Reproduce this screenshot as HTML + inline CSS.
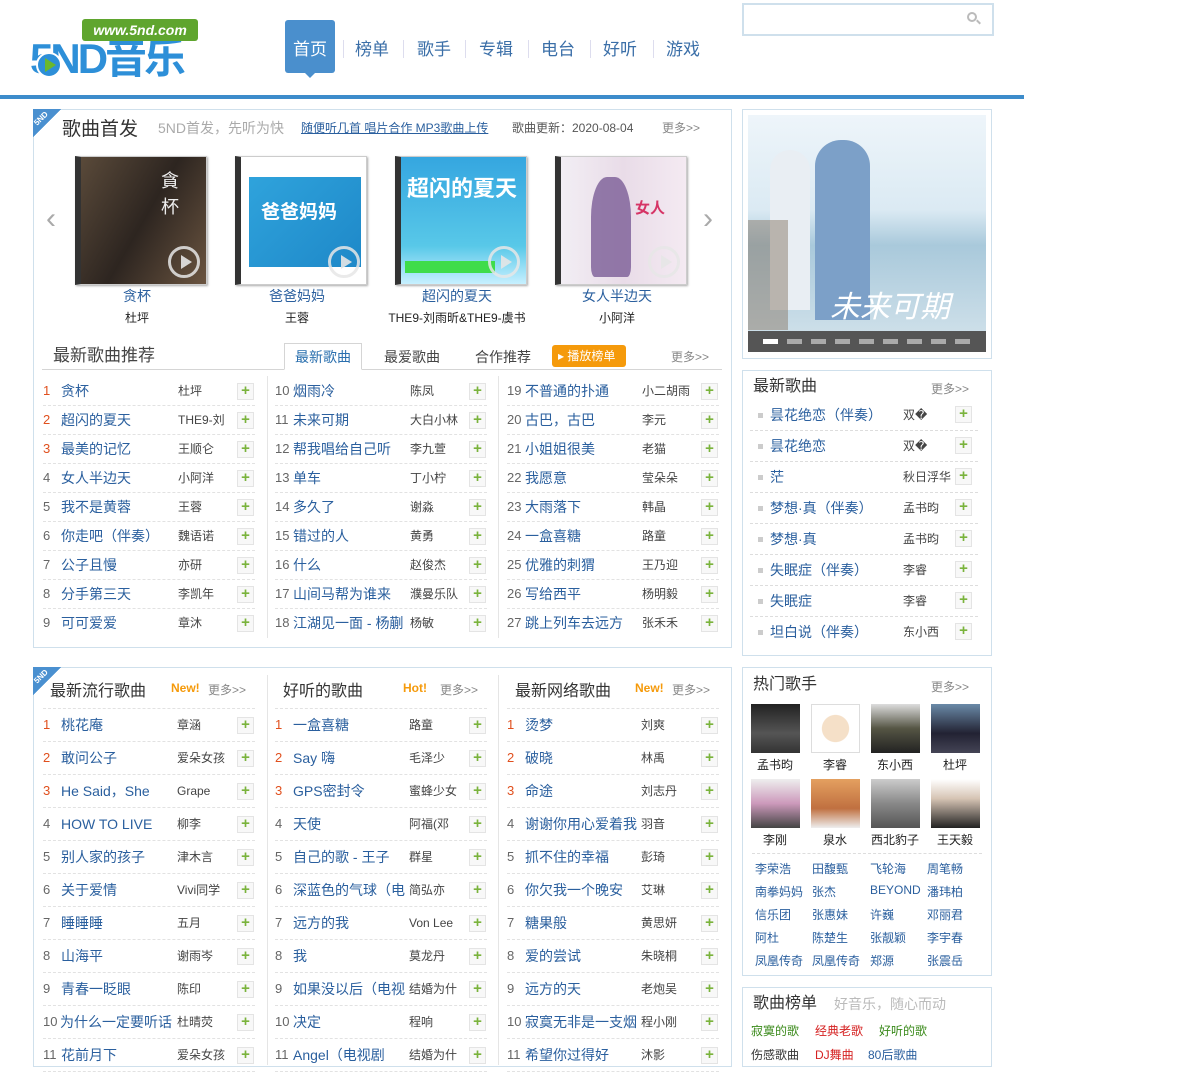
<!DOCTYPE html>
<html><head><meta charset="utf-8"><style>
*{margin:0;padding:0;box-sizing:border-box}
body{width:1200px;height:1063px;overflow:hidden;background:#fff;font-family:"Liberation Sans","Noto Sans CJK SC",sans-serif;position:relative;color:#333}
.a{position:absolute;white-space:nowrap}
.box{position:absolute;border:1px solid #cfe0ec;background:#fff}
.nav{position:absolute;top:35px;font-size:17px;color:#3b6fa8}
.sep{position:absolute;top:40px;width:1px;height:18px;background:#dde}
.col{position:absolute;width:212px}
.r{position:relative;height:29px;border-bottom:1px dashed #e2e2e2;font-size:14px;line-height:28px}
.r .n{position:absolute;left:0;color:#666;font-size:13px}
.r .n.h{color:#e0501e}
.r .s{position:absolute;left:18px;color:#2a5f9e;width:112px;overflow:hidden;white-space:nowrap}
.r .t{position:absolute;left:135px;color:#444;font-size:12px;width:50px;overflow:hidden;white-space:nowrap}
.r .p,.pp{position:absolute;left:194px;top:6px;width:17px;height:17px;border:1px solid #e4e4e4;background:#f8f8f8;color:#7ab33c;font-size:15px;line-height:14px;text-align:center;font-weight:bold}
.b .r{height:33px;line-height:32px}
.b .r .p{top:8px}
.b .r .t{left:134px}
.cov{position:absolute;top:156px;width:132px;height:129px;border:1px solid #ccc;border-left:6px solid #333;box-shadow:1px 1px 2px #aaa}
.play{position:absolute;right:6px;bottom:6px;width:32px;height:32px;border:3px solid rgba(230,230,230,.85);border-radius:50%}
.play:after{content:"";position:absolute;left:10px;top:6px;border-left:11px solid rgba(230,230,230,.9);border-top:7px solid transparent;border-bottom:7px solid transparent}
.at{position:absolute;top:286px;width:160px;text-align:center;font-size:14px;color:#2a5f9e}
.aa{position:absolute;top:309px;width:160px;text-align:center;font-size:12px;color:#222}
.more{font-size:12px;color:#888}
.rl{position:absolute;left:750px;width:228px}
.rr{position:relative;height:31px;border-bottom:1px dashed #ddd;line-height:30px;font-size:14px}
.rr .d{position:absolute;left:8px;top:13px;width:5px;height:5px;background:#ccc}
.rr .s{position:absolute;left:20px;color:#2a5f9e}
.rr .t{position:absolute;left:153px;font-size:12px;color:#444}
.rr .pp{left:205px;top:6px}
.ph{position:absolute;width:49px;height:49px}
.pn{position:absolute;width:60px;text-align:center;font-size:12px;color:#222}
.lk{position:absolute;font-size:12px;color:#2a5f9e}
.tri{position:absolute;left:33px;width:28px;height:28px;background:linear-gradient(135deg,#4a90d0 50%,transparent 50%)}
.tri b{position:absolute;left:0;top:5px;color:#fff;font-size:8px;transform:rotate(-45deg)}
</style></head><body>

<!-- logo -->
<div class="a" style="left:30px;top:38px;font-size:42px;font-weight:bold;color:#2d8fd8;letter-spacing:-3px;line-height:42px">5ND音乐</div>
<div class="a" style="left:82px;top:19px;width:116px;height:22px;background:#5fa52e;border-radius:3px;color:#fff;font-style:italic;font-weight:bold;font-size:14px;line-height:22px;text-align:center">www.5nd.com</div>
<div class="a" style="left:36px;top:52px;width:26px;height:26px;border-radius:50%;background:#2d8fd8;border:2px solid #fff"></div>
<div class="a" style="left:45px;top:58px;border-left:11px solid #6ab82c;border-top:7px solid transparent;border-bottom:7px solid transparent"></div>

<!-- nav -->
<div class="a" style="left:285px;top:20px;width:50px;height:53px;background:#4a8fcd;border-radius:3px"></div>
<div class="a" style="left:305px;top:73px;border-top:5px solid #4a8fcd;border-left:5px solid transparent;border-right:5px solid transparent"></div>
<div class="nav" style="left:293px;color:#fff">首页</div>
<div class="nav" style="left:355px">榜单</div><div class="sep" style="left:343px"></div>
<div class="nav" style="left:417px">歌手</div><div class="sep" style="left:403px"></div>
<div class="nav" style="left:479px">专辑</div><div class="sep" style="left:465px"></div>
<div class="nav" style="left:541px">电台</div><div class="sep" style="left:528px"></div>
<div class="nav" style="left:603px">好听</div><div class="sep" style="left:590px"></div>
<div class="nav" style="left:666px">游戏</div><div class="sep" style="left:653px"></div>

<div class="a" style="left:742px;top:3px;width:252px;height:33px;border:2px solid #cfe0ec"></div>
<div class="a" style="left:967px;top:12px;width:10px;height:10px;border:2px solid #bbb;border-radius:50%"></div>
<div class="a" style="left:976px;top:21px;width:5px;height:2px;background:#bbb;transform:rotate(45deg)"></div>

<div class="a" style="left:0;top:95px;width:1024px;height:4px;background:#3d8ccb"></div>

<!-- box1 -->
<div class="box" style="left:33px;top:109px;width:699px;height:539px"></div>
<div class="tri" style="top:109px"><b>5ND</b></div>
<div class="a" style="left:62px;top:114px;font-size:19px;color:#333">歌曲首发</div>
<div class="a" style="left:158px;top:118px;font-size:14px;color:#aaa">5ND首发，先听为快</div>
<div class="a" style="left:301px;top:119px;font-size:12px;color:#2a5f9e;text-decoration:underline">随便听几首 唱片合作 MP3歌曲上传</div>
<div class="a" style="left:512px;top:119px;font-size:12px;color:#555">歌曲更新：2020-08-04</div>
<div class="a more" style="left:662px;top:119px">更多&gt;&gt;</div>

<div class="a" style="left:46px;top:202px;font-size:30px;color:#aaa">‹</div>
<div class="a" style="left:703px;top:202px;font-size:30px;color:#aaa">›</div>

<div class="cov" style="left:75px;background:linear-gradient(120deg,#5a4a3a,#2d2520 50%,#6a5440)"><div class="a" style="left:80px;top:10px;color:#eee;font-size:18px">貪<br>杯</div><div class="play"></div></div>
<div class="cov" style="left:235px;background:#fff"><div class="a" style="left:8px;top:20px;width:112px;height:90px;background:linear-gradient(135deg,#2fa3dc,#1e88c8)"></div><div class="a" style="left:20px;top:40px;color:#fff;font-size:19px;font-weight:bold">爸爸妈妈</div><div class="play"></div></div>
<div class="cov" style="left:395px;background:linear-gradient(#35a6e0,#58c8e8 70%,#c7f0ff)"><div class="a" style="left:6px;top:14px;color:#fff;font-size:22px;font-weight:bold">超闪的夏天</div><div class="a" style="left:4px;top:104px;width:90px;height:12px;background:#3fdc4a"></div><div class="play"></div></div>
<div class="cov" style="left:555px;background:linear-gradient(90deg,#f2eef4,#e9dce8 50%,#f4eaf2)"><div class="a" style="left:30px;top:20px;width:40px;height:100px;background:#6b4a8a;border-radius:40% 40% 10% 10%;opacity:.7"></div><div class="a" style="left:74px;top:40px;color:#d63466;font-size:15px;font-weight:bold">女人</div><div class="play"></div></div>

<div class="at" style="left:57px">贪杯</div><div class="aa" style="left:57px">杜坪</div>
<div class="at" style="left:217px">爸爸妈妈</div><div class="aa" style="left:217px">王蓉</div>
<div class="at" style="left:377px">超闪的夏天</div><div class="aa" style="left:377px">THE9-刘雨昕&amp;THE9-虞书</div>
<div class="at" style="left:537px">女人半边天</div><div class="aa" style="left:537px">小阿洋</div>

<!-- tabs -->
<div class="a" style="left:53px;top:341px;font-size:17px;color:#444">最新歌曲推荐</div>
<div class="a" style="left:42px;top:369px;width:680px;height:1px;background:#d5d5d5"></div>
<div class="a" style="left:284px;top:343px;width:78px;height:27px;border:1px solid #d5d5d5;border-bottom:1px solid #fff;background:#fff;text-align:center;line-height:26px;font-size:14px;color:#2a6fae">最新歌曲</div>
<div class="a" style="left:384px;top:347px;font-size:14px;color:#444">最爱歌曲</div>
<div class="a" style="left:475px;top:347px;font-size:14px;color:#444">合作推荐</div>
<div class="a" style="left:552px;top:345px;width:74px;height:22px;background:#f59a0b;border-radius:3px;color:#fff;font-size:12px;line-height:22px;padding-left:6px">▸ 播放榜单</div>
<div class="a more" style="left:671px;top:348px">更多&gt;&gt;</div>
<div class="a" style="left:267px;top:376px;width:1px;height:262px;background:#e5e5e5"></div>
<div class="a" style="left:498px;top:376px;width:1px;height:262px;background:#e5e5e5"></div>

<div class="col" style="left:43px;top:377px">
<div class="r"><span class="n h">1</span><span class="s">贪杯</span><span class="t">杜坪</span><span class="p">+</span></div>
<div class="r"><span class="n h">2</span><span class="s">超闪的夏天</span><span class="t">THE9-刘</span><span class="p">+</span></div>
<div class="r"><span class="n h">3</span><span class="s">最美的记忆</span><span class="t">王顺仑</span><span class="p">+</span></div>
<div class="r"><span class="n">4</span><span class="s">女人半边天</span><span class="t">小阿洋</span><span class="p">+</span></div>
<div class="r"><span class="n">5</span><span class="s">我不是黄蓉</span><span class="t">王蓉</span><span class="p">+</span></div>
<div class="r"><span class="n">6</span><span class="s">你走吧（伴奏）</span><span class="t">魏语诺</span><span class="p">+</span></div>
<div class="r"><span class="n">7</span><span class="s">公子且慢</span><span class="t">亦研</span><span class="p">+</span></div>
<div class="r"><span class="n">8</span><span class="s">分手第三天</span><span class="t">李凯年</span><span class="p">+</span></div>
<div class="r" style="border:0"><span class="n">9</span><span class="s">可可爱爱</span><span class="t">章沐</span><span class="p">+</span></div>
</div>
<div class="col" style="left:275px;top:377px">
<div class="r"><span class="n">10</span><span class="s">烟雨冷</span><span class="t">陈凤</span><span class="p">+</span></div>
<div class="r"><span class="n">11</span><span class="s">未来可期</span><span class="t">大白小林</span><span class="p">+</span></div>
<div class="r"><span class="n">12</span><span class="s">帮我唱给自己听</span><span class="t">李九萱</span><span class="p">+</span></div>
<div class="r"><span class="n">13</span><span class="s">单车</span><span class="t">丁小柠</span><span class="p">+</span></div>
<div class="r"><span class="n">14</span><span class="s">多久了</span><span class="t">谢淼</span><span class="p">+</span></div>
<div class="r"><span class="n">15</span><span class="s">错过的人</span><span class="t">黄勇</span><span class="p">+</span></div>
<div class="r"><span class="n">16</span><span class="s">什么</span><span class="t">赵俊杰</span><span class="p">+</span></div>
<div class="r"><span class="n">17</span><span class="s">山间马帮为谁来</span><span class="t">濮曼乐队</span><span class="p">+</span></div>
<div class="r" style="border:0"><span class="n">18</span><span class="s">江湖见一面 - 杨蒯</span><span class="t">杨敏</span><span class="p">+</span></div>
</div>
<div class="col" style="left:507px;top:377px">
<div class="r"><span class="n">19</span><span class="s">不普通的扑通</span><span class="t">小二胡雨</span><span class="p">+</span></div>
<div class="r"><span class="n">20</span><span class="s">古巴，古巴</span><span class="t">李元</span><span class="p">+</span></div>
<div class="r"><span class="n">21</span><span class="s">小姐姐很美</span><span class="t">老猫</span><span class="p">+</span></div>
<div class="r"><span class="n">22</span><span class="s">我愿意</span><span class="t">莹朵朵</span><span class="p">+</span></div>
<div class="r"><span class="n">23</span><span class="s">大雨落下</span><span class="t">韩晶</span><span class="p">+</span></div>
<div class="r"><span class="n">24</span><span class="s">一盒喜糖</span><span class="t">路童</span><span class="p">+</span></div>
<div class="r"><span class="n">25</span><span class="s">优雅的刺猬</span><span class="t">王乃迎</span><span class="p">+</span></div>
<div class="r"><span class="n">26</span><span class="s">写给西平</span><span class="t">杨明毅</span><span class="p">+</span></div>
<div class="r" style="border:0"><span class="n">27</span><span class="s">跳上列车去远方</span><span class="t">张禾禾</span><span class="p">+</span></div>
</div>

<!-- right image -->
<div class="box" style="left:742px;top:109px;width:250px;height:250px"></div>
<div class="a" style="left:748px;top:115px;width:238px;height:237px;background:linear-gradient(#eef5fa,#dbeaf3 40%,#a9c9db 55%,#d5e4ec)"></div>
<div class="a" style="left:770px;top:150px;width:40px;height:160px;background:#e9eef3;border-radius:20px 20px 0 0"></div>
<div class="a" style="left:815px;top:140px;width:55px;height:180px;background:#7ca0c8;border-radius:26px 26px 0 0"></div>
<div class="a" style="left:748px;top:220px;width:40px;height:110px;background:#8a7a6a;opacity:.5"></div>
<div class="a" style="left:830px;top:282px;font-size:30px;color:#fff;font-style:italic">未来可期</div>
<div class="a" style="left:748px;top:331px;width:238px;height:21px;background:#555"></div>
<div class="a" style="left:763px;top:339px;width:210px;height:5px;background:repeating-linear-gradient(90deg,#aaa 0 15px,transparent 15px 24px)"></div>
<div class="a" style="left:763px;top:339px;width:15px;height:5px;background:#fff"></div>

<!-- right list -->
<div class="box" style="left:742px;top:370px;width:250px;height:286px"></div>
<div class="a" style="left:753px;top:372px;font-size:16px;color:#333">最新歌曲</div>
<div class="a more" style="left:931px;top:380px">更多&gt;&gt;</div>
<div class="rl" style="top:400px">
<div class="rr"><span class="d"></span><span class="s">昙花绝恋（伴奏）</span><span class="t">双�</span><span class="pp">+</span></div>
<div class="rr"><span class="d"></span><span class="s">昙花绝恋</span><span class="t">双�</span><span class="pp">+</span></div>
<div class="rr"><span class="d"></span><span class="s">茫</span><span class="t">秋日浮华</span><span class="pp">+</span></div>
<div class="rr"><span class="d"></span><span class="s">梦想·真（伴奏）</span><span class="t">孟书昀</span><span class="pp">+</span></div>
<div class="rr"><span class="d"></span><span class="s">梦想·真</span><span class="t">孟书昀</span><span class="pp">+</span></div>
<div class="rr"><span class="d"></span><span class="s">失眠症（伴奏）</span><span class="t">李睿</span><span class="pp">+</span></div>
<div class="rr"><span class="d"></span><span class="s">失眠症</span><span class="t">李睿</span><span class="pp">+</span></div>
<div class="rr" style="border:0"><span class="d"></span><span class="s">坦白说（伴奏）</span><span class="t">东小西</span><span class="pp">+</span></div>
</div>

<!-- bottom box -->
<div class="box" style="left:33px;top:667px;width:699px;height:400px"></div>
<div class="tri" style="top:667px"><b>5ND</b></div>
<div class="a" style="left:50px;top:677px;font-size:16px;color:#333">最新流行歌曲</div>
<div class="a" style="left:171px;top:681px;font-size:12px;color:#f59a0b;font-weight:bold">New!</div>
<div class="a more" style="left:208px;top:681px">更多&gt;&gt;</div>
<div class="a" style="left:283px;top:677px;font-size:16px;color:#333">好听的歌曲</div>
<div class="a" style="left:403px;top:681px;font-size:12px;color:#f59a0b;font-weight:bold">Hot!</div>
<div class="a more" style="left:440px;top:681px">更多&gt;&gt;</div>
<div class="a" style="left:515px;top:677px;font-size:16px;color:#333">最新网络歌曲</div>
<div class="a" style="left:635px;top:681px;font-size:12px;color:#f59a0b;font-weight:bold">New!</div>
<div class="a more" style="left:672px;top:681px">更多&gt;&gt;</div>
<div class="a" style="left:267px;top:675px;width:1px;height:390px;background:#e5e5e5"></div>
<div class="a" style="left:498px;top:675px;width:1px;height:390px;background:#e5e5e5"></div>

<div class="col b" style="left:43px;top:708px;border-top:1px dashed #e2e2e2">
<div class="r"><span class="n h">1</span><span class="s">桃花庵</span><span class="t">章涵</span><span class="p">+</span></div>
<div class="r"><span class="n h">2</span><span class="s">敢问公子</span><span class="t">爱朵女孩</span><span class="p">+</span></div>
<div class="r"><span class="n h">3</span><span class="s">He Said，She</span><span class="t">Grape</span><span class="p">+</span></div>
<div class="r"><span class="n">4</span><span class="s">HOW TO LIVE</span><span class="t">柳李</span><span class="p">+</span></div>
<div class="r"><span class="n">5</span><span class="s">别人家的孩子</span><span class="t">津木言</span><span class="p">+</span></div>
<div class="r"><span class="n">6</span><span class="s">关于爱情</span><span class="t">Vivi同学</span><span class="p">+</span></div>
<div class="r"><span class="n">7</span><span class="s">睡睡睡</span><span class="t">五月</span><span class="p">+</span></div>
<div class="r"><span class="n">8</span><span class="s">山海平</span><span class="t">谢雨岑</span><span class="p">+</span></div>
<div class="r"><span class="n">9</span><span class="s">青春一眨眼</span><span class="t">陈印</span><span class="p">+</span></div>
<div class="r"><span class="n">10</span><span class="s" style="left:17px;width:120px">为什么一定要听话</span><span class="t">杜晴荧</span><span class="p">+</span></div>
<div class="r"><span class="n">11</span><span class="s">花前月下</span><span class="t">爱朵女孩</span><span class="p">+</span></div>
</div>
<div class="col b" style="left:275px;top:708px;border-top:1px dashed #e2e2e2">
<div class="r"><span class="n h">1</span><span class="s">一盒喜糖</span><span class="t">路童</span><span class="p">+</span></div>
<div class="r"><span class="n h">2</span><span class="s">Say 嗨</span><span class="t">毛泽少</span><span class="p">+</span></div>
<div class="r"><span class="n h">3</span><span class="s">GPS密封令</span><span class="t">蜜蜂少女</span><span class="p">+</span></div>
<div class="r"><span class="n">4</span><span class="s">天使</span><span class="t">阿福(邓</span><span class="p">+</span></div>
<div class="r"><span class="n">5</span><span class="s">自己的歌 - 王子</span><span class="t">群星</span><span class="p">+</span></div>
<div class="r"><span class="n">6</span><span class="s">深蓝色的气球（电</span><span class="t">简弘亦</span><span class="p">+</span></div>
<div class="r"><span class="n">7</span><span class="s">远方的我</span><span class="t">Von Lee</span><span class="p">+</span></div>
<div class="r"><span class="n">8</span><span class="s">我</span><span class="t">莫龙丹</span><span class="p">+</span></div>
<div class="r"><span class="n">9</span><span class="s">如果没以后（电视</span><span class="t">结婚为什</span><span class="p">+</span></div>
<div class="r"><span class="n">10</span><span class="s">决定</span><span class="t">程响</span><span class="p">+</span></div>
<div class="r"><span class="n">11</span><span class="s">Angel（电视剧</span><span class="t">结婚为什</span><span class="p">+</span></div>
</div>
<div class="col b" style="left:507px;top:708px;border-top:1px dashed #e2e2e2">
<div class="r"><span class="n h">1</span><span class="s">烫梦</span><span class="t">刘爽</span><span class="p">+</span></div>
<div class="r"><span class="n h">2</span><span class="s">破晓</span><span class="t">林禹</span><span class="p">+</span></div>
<div class="r"><span class="n h">3</span><span class="s">命途</span><span class="t">刘志丹</span><span class="p">+</span></div>
<div class="r"><span class="n">4</span><span class="s" style="width:118px">谢谢你用心爱着我</span><span class="t">羽音</span><span class="p">+</span></div>
<div class="r"><span class="n">5</span><span class="s">抓不住的幸福</span><span class="t">彭琦</span><span class="p">+</span></div>
<div class="r"><span class="n">6</span><span class="s">你欠我一个晚安</span><span class="t">艾琳</span><span class="p">+</span></div>
<div class="r"><span class="n">7</span><span class="s">糖果般</span><span class="t">黄思妍</span><span class="p">+</span></div>
<div class="r"><span class="n">8</span><span class="s">爱的尝试</span><span class="t">朱晓桐</span><span class="p">+</span></div>
<div class="r"><span class="n">9</span><span class="s">远方的天</span><span class="t">老炮吴</span><span class="p">+</span></div>
<div class="r"><span class="n">10</span><span class="s">寂寞无非是一支烟</span><span class="t">程小刚</span><span class="p">+</span></div>
<div class="r"><span class="n">11</span><span class="s">希望你过得好</span><span class="t">沐影</span><span class="p">+</span></div>
</div>

<!-- hot singers -->
<div class="box" style="left:742px;top:667px;width:250px;height:309px"></div>
<div class="a" style="left:753px;top:670px;font-size:16px;color:#333">热门歌手</div>
<div class="a more" style="left:931px;top:678px">更多&gt;&gt;</div>
<div class="ph" style="left:751px;top:704px;background:linear-gradient(#222,#555 60%,#333)"></div>
<div class="ph" style="left:811px;top:704px;background:radial-gradient(circle at 50% 50%,#f5e0c8 40%,#fff 42%);border:1px solid #ddd"></div>
<div class="ph" style="left:871px;top:704px;background:linear-gradient(#ddd,#554 50%,#222)"></div>
<div class="ph" style="left:931px;top:704px;background:linear-gradient(#6a8aa8,#223 60%,#445)"></div>
<div class="pn" style="left:745px;top:756px">孟书昀</div><div class="pn" style="left:805px;top:756px">李睿</div><div class="pn" style="left:865px;top:756px">东小西</div><div class="pn" style="left:925px;top:756px">杜坪</div>
<div class="ph" style="left:751px;top:779px;background:linear-gradient(#eee,#c9b 50%,#444)"></div>
<div class="ph" style="left:811px;top:779px;background:linear-gradient(#e4a060,#c07040 60%,#eee)"></div>
<div class="ph" style="left:871px;top:779px;background:linear-gradient(#ccc,#888 50%,#555)"></div>
<div class="ph" style="left:931px;top:779px;background:linear-gradient(#fff,#d6c4b4 40%,#222)"></div>
<div class="pn" style="left:745px;top:831px">李刚</div><div class="pn" style="left:805px;top:831px">泉水</div><div class="pn" style="left:865px;top:831px">西北豹子</div><div class="pn" style="left:925px;top:831px">王天毅</div>
<div class="a" style="left:752px;top:853px;width:230px;border-top:1px dashed #ddd"></div>
<div class="lk" style="left:755px;top:860px">李荣浩</div><div class="lk" style="left:812px;top:860px">田馥甄</div><div class="lk" style="left:870px;top:860px">飞轮海</div><div class="lk" style="left:927px;top:860px">周笔畅</div>
<div class="lk" style="left:755px;top:883px">南拳妈妈</div><div class="lk" style="left:812px;top:883px">张杰</div><div class="lk" style="left:870px;top:883px">BEYOND</div><div class="lk" style="left:927px;top:883px">潘玮柏</div>
<div class="lk" style="left:755px;top:906px">信乐团</div><div class="lk" style="left:812px;top:906px">张惠妹</div><div class="lk" style="left:870px;top:906px">许巍</div><div class="lk" style="left:927px;top:906px">邓丽君</div>
<div class="lk" style="left:755px;top:929px">阿杜</div><div class="lk" style="left:812px;top:929px">陈楚生</div><div class="lk" style="left:870px;top:929px">张靓颖</div><div class="lk" style="left:927px;top:929px">李宇春</div>
<div class="lk" style="left:755px;top:952px">凤凰传奇</div><div class="lk" style="left:812px;top:952px">凤凰传奇</div><div class="lk" style="left:870px;top:952px">郑源</div><div class="lk" style="left:927px;top:952px">张震岳</div>

<!-- chart -->
<div class="box" style="left:742px;top:987px;width:250px;height:80px"></div>
<div class="a" style="left:753px;top:989px;font-size:16px;color:#333">歌曲榜单</div>
<div class="a" style="left:834px;top:994px;font-size:14px;color:#bbb">好音乐，随心而动</div>
<div class="a" style="left:751px;top:1022px;font-size:12px;color:#3a8a1a">寂寞的歌</div>
<div class="a" style="left:815px;top:1022px;font-size:12px;color:#d52020">经典老歌</div>
<div class="a" style="left:879px;top:1022px;font-size:12px;color:#3a8a1a">好听的歌</div>
<div class="a" style="left:751px;top:1046px;font-size:12px;color:#333">伤感歌曲</div>
<div class="a" style="left:815px;top:1046px;font-size:12px;color:#d52020">DJ舞曲</div>
<div class="a" style="left:868px;top:1046px;font-size:12px;color:#2a5f9e">80后歌曲</div>
</body></html>
